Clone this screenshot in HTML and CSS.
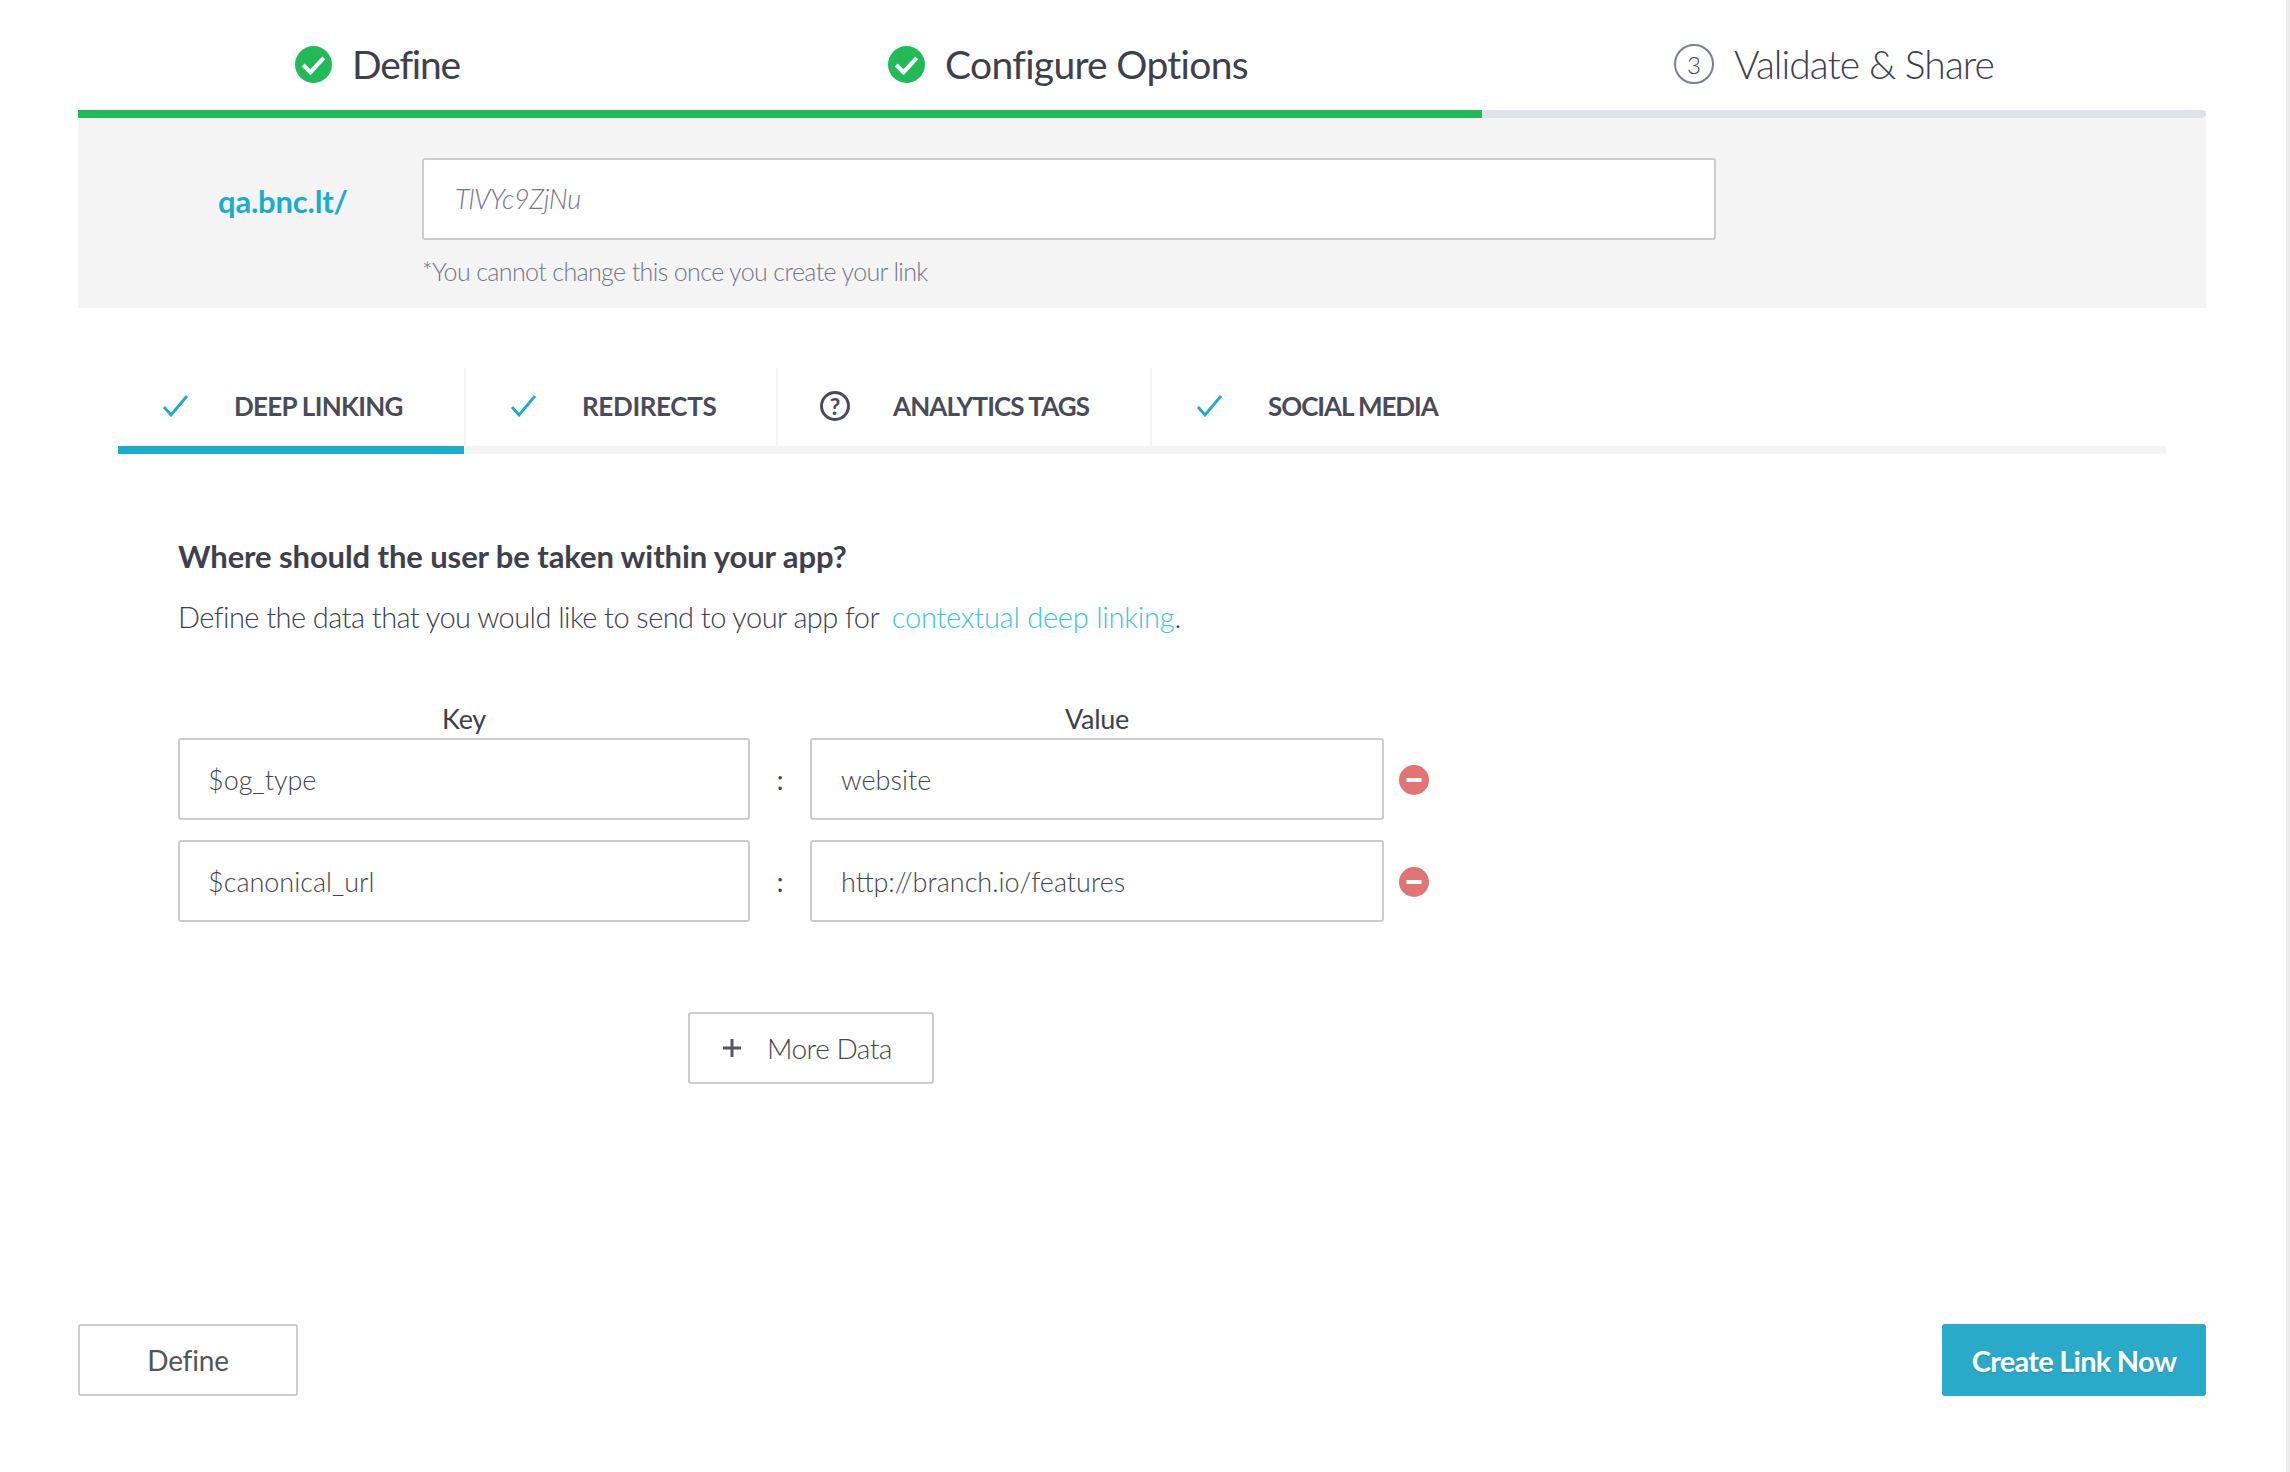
FILE: index.html
```html
<!DOCTYPE html>
<html lang="en">
<head>
<meta charset="utf-8">
<title>Create Link</title>
<link rel="stylesheet" href="styles.css">
</head>
<body>
<div class="page">
  <header class="steps">
    <div class="step step-first">
      <svg class="step-icon" viewBox="0 0 36 36"><circle cx="18" cy="18" r="18" fill="#20ba57"/><path d="M8 18.500l7 7L28 11.500" fill="none" stroke="#fff" stroke-width="4"/></svg>
      <span>Define</span>
    </div>
    <div class="step">
      <svg class="step-icon" viewBox="0 0 36 36"><circle cx="18" cy="18" r="18" fill="#20ba57"/><path d="M8 18.500l7 7L28 11.500" fill="none" stroke="#fff" stroke-width="4"/></svg>
      <span>Configure Options</span>
    </div>
    <div class="step step-todo">
      <span class="step-num">3</span>
      <span>Validate &amp; Share</span>
    </div>
  </header>
  <div class="progress"><div class="progress-fill"></div></div>

  <section class="slug">
    <div class="slug-domain">qa.bnc.lt/</div>
    <div class="slug-field">
      <input class="field field-slug" type="text" placeholder="TlVYc9ZjNu">
      <p class="slug-hint">*You cannot change this once you create your link</p>
    </div>
  </section>

  <nav class="tabs">
    <div class="tab tab-active">
      <svg class="tab-icon" viewBox="0 0 28 24"><path d="M2 13l7 8L25 2" fill="none" stroke="#19aed0" stroke-width="2.800"/></svg>
      <span>DEEP LINKING</span>
    </div>
    <div class="tab tab-2">
      <svg class="tab-icon" viewBox="0 0 28 24"><path d="M2 13l7 8L25 2" fill="none" stroke="#19aed0" stroke-width="2.800"/></svg>
      <span>REDIRECTS</span>
    </div>
    <div class="tab tab-3">
      <span class="tab-help">?</span>
      <span>ANALYTICS TAGS</span>
    </div>
    <div class="tab tab-4">
      <svg class="tab-icon" viewBox="0 0 28 24"><path d="M2 13l7 8L25 2" fill="none" stroke="#19aed0" stroke-width="2.800"/></svg>
      <span>SOCIAL MEDIA</span>
    </div>
  </nav>

  <main class="content">
    <h2 class="title">Where should the user be taken within your app?</h2>
    <p class="lead">Define the data that you would like to send to your app for <a class="lead-link" href="#">contextual deep linking</a>.</p>

    <div class="kv">
      <div class="kv-row">
        <div class="kv-label">Key</div><div></div><div class="kv-label">Value</div>
      </div>
      <div class="kv-row">
        <input class="field" type="text" value="$og_type">
        <div class="kv-sep">:</div>
        <input class="field field-value" type="text" value="website">
        <svg class="remove" viewBox="0 0 30 30"><circle cx="15" cy="15" r="15" fill="#e37474"/><rect x="7.500" y="13" width="15" height="4" fill="#fff"/></svg>
      </div>
      <div class="kv-row">
        <input class="field" type="text" value="$canonical_url">
        <div class="kv-sep">:</div>
        <input class="field field-value" type="text" value="http://branch.io/features">
        <svg class="remove" viewBox="0 0 30 30"><circle cx="15" cy="15" r="15" fill="#e37474"/><rect x="7.500" y="13" width="15" height="4" fill="#fff"/></svg>
      </div>
    </div>

    <button class="more" type="button">
      <svg class="more-plus" viewBox="0 0 18 18"><path d="M9 0v18M0 9h18" stroke="#55565f" stroke-width="3"/></svg>
      <span>More Data</span>
    </button>
  </main>

  <footer class="actions">
    <button class="btn btn-back" type="button">Define</button>
    <button class="btn btn-primary" type="button">Create Link Now</button>
  </footer>
</div>
</body>
</html>
```

FILE: styles.css
```css
* { box-sizing: border-box; }

html, body {
  margin: 0;
  height: 100%;
  background: #fff;
}

body {
  overflow: hidden;
  font-family: "Lato", "Noto Sans", sans-serif;
  color: #3e404d;
  border-right: 4px solid #ececec;
}

.page {
  width: 2128px;
  margin-left: 78px;
}

/* Wizard steps */
.steps {
  display: grid;
  grid-template-columns: 596px 788px 1fr;
  height: 110px;
  padding-top: 18px;
}

.step {
  display: flex;
  align-items: center;
  justify-content: center;
  gap: 20px;
  font-size: 39px;
  letter-spacing: -0.7px;
  color: #3e404d;
  height: 92px;
}

.step-first {
  letter-spacing: -1.2px;
  padding-left: 3px;
}

.step-icon {
  width: 37px;
  height: 37px;
  flex: none;
}

.step-todo {
  font-weight: 300;
  letter-spacing: -0.94px;
}

.step-num {
  width: 40px;
  height: 40px;
  border: 2px solid #7a7e90;
  border-radius: 50%;
  font-size: 24px;
  font-weight: 300;
  letter-spacing: 0;
  display: flex;
  align-items: center;
  justify-content: center;
}

.progress {
  height: 8px;
  background: #dfe2e7;
  border-radius: 0 4px 4px 0;
}

.progress-fill {
  width: 1404px;
  height: 100%;
  background: #20ba57;
}

/* Slug panel */
.slug {
  display: flex;
  height: 190px;
  padding-top: 40px;
  background: #f4f4f4;
}

.slug-domain {
  width: 344px;
  padding: 24px 0 0 140px;
  font-size: 31px;
  font-weight: 700;
  letter-spacing: -0.2px;
  color: #19aed0;
  white-space: nowrap;
}

.slug-field {
  width: 1294px;
}

.slug-hint {
  margin: 16px 0 0;
  font-size: 25px;
  font-weight: 300;
  letter-spacing: -0.63px;
  color: #73768a;
}

/* Text inputs */
.field {
  display: block;
  width: 100%;
  height: 82px;
  padding: 0 28px;
  border: 2px solid #cccccc;
  border-radius: 3px;
  background: #fff;
  font-family: inherit;
  font-size: 27px;
  font-weight: 300;
  letter-spacing: 0;
  color: #44454c;
  outline: none;
}

.field-value {
  padding: 0 29px;
}

.field-slug {
  padding: 0 31px 2px;
  letter-spacing: -0.35px;
}

.field-slug::placeholder {
  font-style: italic;
  color: #73768a;
  opacity: 1;
}

/* Tabs */
.tabs {
  display: flex;
  width: 2048px;
  height: 86px;
  margin: 60px 0 0 40px;
  border-bottom: 8px solid #f4f4f4;
  font-size: 26px;
  font-weight: 700;
  letter-spacing: -0.7px;
  color: #4a4b59;
}

.tab {
  display: flex;
  align-items: center;
  height: 86px;
  padding-bottom: 10px;
  white-space: nowrap;
  border-right: 2px solid #f4f4f4;
}

.tab:last-child { border-right: 0; }

.tab-active {
  width: 348px;
  padding-left: 44px;
  gap: 44px;
  box-shadow: inset 0 -8px 0 #19aed0;
}

.tab-2 {
  width: 312px;
  padding-left: 44px;
  gap: 44px;
  letter-spacing: -0.35px;
}

.tab-3 {
  width: 374px;
  padding-left: 42px;
  gap: 43px;
  letter-spacing: -0.9px;
}

.tab-4 {
  padding-left: 44px;
  gap: 44px;
  letter-spacing: -1.05px;
}

.tab-icon {
  width: 28px;
  height: 24px;
  flex: none;
}

.tab-help {
  width: 30px;
  height: 30px;
  border: 3px solid #4a4b59;
  border-radius: 50%;
  display: flex;
  align-items: center;
  justify-content: center;
  font-size: 23px;
  font-weight: 700;
  letter-spacing: 0;
  flex: none;
}

/* Content */
.content {
  padding: 82px 0 0 100px;
  height: 870px;
}

.title {
  margin: 0;
  font-size: 31px;
  line-height: 40px;
  font-weight: 700;
  letter-spacing: -0.1px;
  color: #3e404d;
}

.lead {
  margin: 21px 0 0;
  font-size: 29px;
  line-height: 40px;
  font-weight: 300;
  letter-spacing: -0.56px;
  color: #3e404d;
}

.lead-link {
  margin-left: 6px;
  color: #3bc3e3;
  text-decoration: none;
  letter-spacing: -0.23px;
}

.kv {
  margin-top: 63px;
}

.kv-row {
  display: grid;
  grid-template-columns: 572px 60px 574px 45px;
  align-items: center;
}

.kv-row + .kv-row + .kv-row {
  margin-top: 20px;
}

.kv-label {
  height: 38px;
  line-height: 38px;
  text-align: center;
  font-size: 27px;
  color: #3e404d;
  letter-spacing: -0.3px;
}

.kv-sep {
  text-align: center;
  font-size: 27px;
  color: #44454c;
}

.remove {
  width: 30px;
  height: 30px;
  margin: 2px 0 0 15px;
  display: block;
}

.more {
  display: flex;
  align-items: center;
  gap: 26px;
  width: 246px;
  height: 72px;
  margin: 90px 0 0 510px;
  padding: 0 0 0 33px;
  background: #fff;
  border: 2px solid #cccccc;
  border-radius: 3px;
  font-family: inherit;
  font-size: 28px;
  font-weight: 300;
  letter-spacing: -0.5px;
  color: #44454c;
}

.more-plus {
  width: 18px;
  height: 18px;
  flex: none;
}

/* Footer */
.actions {
  display: flex;
  justify-content: space-between;
}

.btn {
  height: 72px;
  border-radius: 3px;
  font-family: inherit;
  font-size: 28px;
  letter-spacing: -0.2px;
}

.btn-back {
  width: 220px;
  background: #fff;
  border: 2px solid #cccccc;
  color: #555;
}

.btn-primary {
  width: 264px;
  border: 0;
  background: #2aaacb;
  color: #fff;
  font-size: 29px;
  font-weight: 700;
  letter-spacing: -0.75px;
  text-shadow: 0 1px 2px rgba(0, 0, 0, 0.15);
}
```
